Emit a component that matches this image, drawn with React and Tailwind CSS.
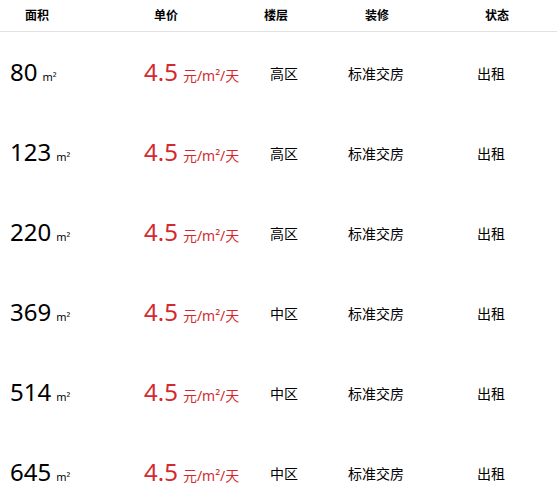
import React from "react";

const rows = [
  { area: "80", floor: "高区" },
  { area: "123", floor: "高区" },
  { area: "220", floor: "高区" },
  { area: "369", floor: "中区" },
  { area: "514", floor: "中区" },
  { area: "645", floor: "中区" },
];

const App = () => {
  return (
    <div
      className="w-[557px] h-[499px] overflow-hidden bg-white text-black"
      style={{ fontFamily: '"Noto Sans", "Noto Sans CJK SC", sans-serif' }}
    >
      {/* header */}
      <div className="flex items-center h-[32px] border-b border-[#e2e2e2] text-[12px] font-bold">
        <div className="w-[74px] text-center">面积</div>
        <div className="w-[184px] text-center">单价</div>
        <div className="w-[36px] text-center">楼层</div>
        <div className="w-[166px] text-center">装修</div>
        <div className="w-[74px] text-center">状态</div>
      </div>

      {/* rows */}
      {rows.map((r) => (
        <div key={r.area} className="flex items-center h-[80px] pt-[2px] text-[14px]">
          <div className="w-[144px] pl-[10px] flex items-baseline gap-[5px]">
            <span className="text-[24px] leading-none">{r.area}</span>
            <span className="text-[11px]">m²</span>
          </div>
          <div className="w-[126px] flex items-baseline gap-[5px] text-[#d22b2f]">
            <span className="text-[24px] leading-none">4.5</span>
            <span className="text-[14px]">元/m²/天</span>
          </div>
          <div className="w-[78px]">{r.floor}</div>
          <div className="w-[129px]">标准交房</div>
          <div>出租</div>
        </div>
      ))}
    </div>
  );
};

export default App;
